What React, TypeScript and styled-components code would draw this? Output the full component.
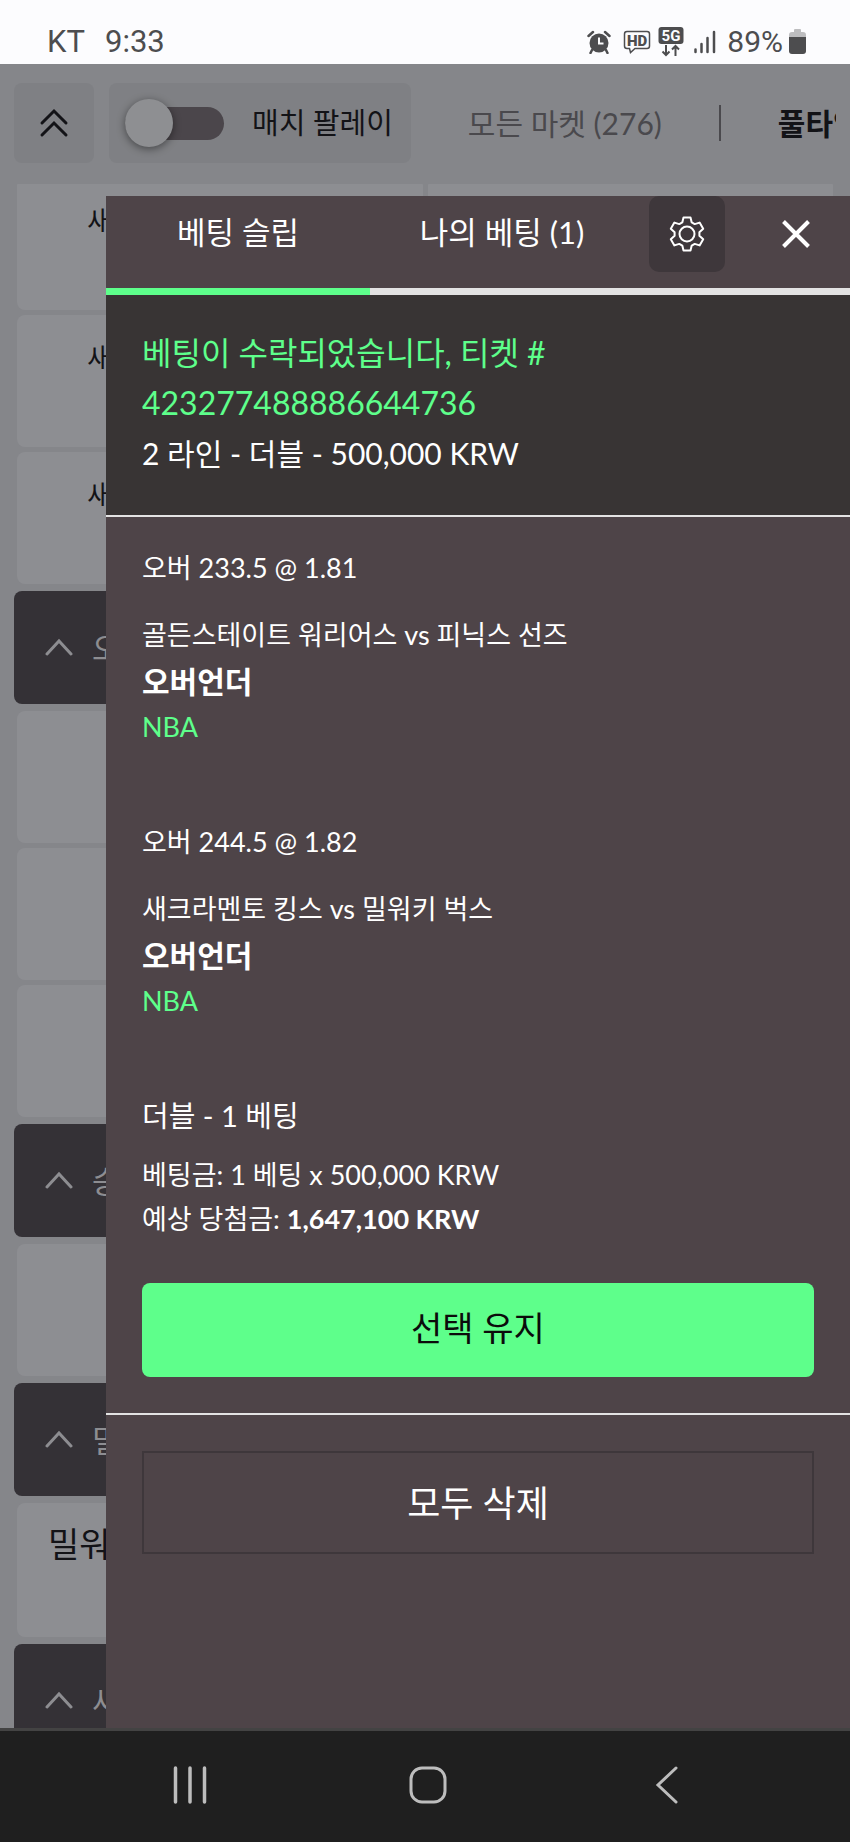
import React from 'react';
import styled, { createGlobalStyle } from 'styled-components';

const color = {
  page: '#85868a',
  card: '#8d8e92',
  control: '#7f8084',
  ink: '#131317',
  header: '#343136',
  headerText: '#8d8d91',
  drawer: '#4e4448',
  banner: '#383434',
  line: '#e3e3e3',
  green: '#5eff8b',
  outline: '#3e373b',
  status: '#4d4d4f',
  nav: '#1f1f1f',
};

const GlobalStyle = createGlobalStyle`
  *, *::before, *::after { box-sizing: border-box; }
  body { margin: 0; background: ${color.nav}; }
  button, input { font: inherit; color: inherit; }
  button { background: none; border: 0; padding: 0; cursor: pointer; }
  p, h2, h3 { margin: 0; font-weight: 400; font-size: inherit; }
  svg { display: block; }
`;

const Screen = styled.div`
  display: flex;
  flex-direction: column;
  min-height: 100vh;
  font-family: Lato, 'Noto Sans CJK KR', sans-serif;
`;

/* ---------- phone status bar ---------- */

const StatusBar = styled.header`
  display: flex;
  align-items: center;
  height: 64px;
  padding: 20px 44px 0 47px;
  background: #fcfcfe;
  color: ${color.status};
  font-family: Roboto, sans-serif;
  font-size: 31px;
  line-height: 36px;
`;

const Clock = styled.span`
  margin-left: 20px;
`;

const StatusIcons = styled.div`
  display: flex;
  align-items: center;
  margin-left: auto;
`;

const StatusIcon = styled.svg<{ $gap: number }>`
  margin-right: ${(p) => p.$gap}px;
`;

const Percent = styled.span`
  margin-right: 6px;
  font-size: 30px;
`;

/* ---------- market page under the drawer ---------- */

const Stage = styled.main`
  display: grid;
  grid-template-columns: minmax(0, 1fr);
  flex: 1;
`;

const MarketPage = styled.section`
  grid-area: 1 / 1;
  contain: size;
  overflow: hidden;
  background: ${color.page};
  color: ${color.ink};
`;

const Toolbar = styled.div`
  display: flex;
  align-items: center;
  height: 120px;
  padding: 0 14px 2px;
  font-size: 29px;
  line-height: 40px;
  white-space: nowrap;
`;

const CollapseButton = styled.button`
  display: grid;
  place-items: center;
  flex: none;
  width: 80px;
  height: 80px;
  border-radius: 8px;
  background: ${color.control};
`;

const ParlayToggle = styled.label`
  display: flex;
  align-items: center;
  flex: none;
  gap: 28px;
  height: 80px;
  margin-left: 15px;
  padding: 0 18px 0 16px;
  border-radius: 8px;
  background: ${color.control};
`;

const Switch = styled.input`
  appearance: none;
  display: flex;
  align-items: center;
  width: 99px;
  height: 33px;
  margin: 0;
  border-radius: 17px;
  background: #4b464b;

  &::before {
    content: '';
    width: 48px;
    height: 48px;
    border-radius: 50%;
    background: #8e8f92;
    box-shadow: 0 2px 8px rgba(0, 0, 0, 0.45);
  }

  &:checked {
    justify-content: flex-end;
  }
`;

const MarketTabs = styled.nav`
  display: flex;
  align-items: center;
  flex: 1;
  gap: 57px;
  min-width: 0;
  padding-left: 57px;
  overflow: hidden;
  font-size: 30px;
`;

const MarketTab = styled.button<{ $active?: boolean }>`
  flex: none;
  color: ${(p) => (p.$active ? color.ink : '#4a494d')};
  font-weight: ${(p) => (p.$active ? 700 : 400)};
`;

const TabDivider = styled.span`
  flex: none;
  width: 2px;
  height: 36px;
  background: #4a494d;
`;

const ListViewport = styled.div`
  overflow: hidden;
`;

const MarketList = styled.div`
  display: flex;
  flex-direction: column;
  gap: 7px;
  margin-top: -6px;
  padding: 0 14px;
`;

const MarketHeader = styled.button`
  display: flex;
  align-items: center;
  gap: 18px;
  width: 100%;
  height: 113px;
  padding: 0 30px 2px;
  border-radius: 8px;
  background: ${color.header};
  color: ${color.headerText};
  font-size: 31px;
  text-align: left;
  white-space: nowrap;
`;

const OddsGrid = styled.div`
  display: grid;
  grid-template-columns: 1fr 1fr;
  gap: 5px;
  padding: 0 3px;
`;

const OddsCard = styled.div<{ $large?: boolean }>`
  height: ${(p) => (p.$large ? 134 : 132)}px;
  padding: ${(p) => (p.$large ? '18px 31px' : '20px 70px')};
  overflow: hidden;
  border-radius: 8px;
  background: ${color.card};
  font-size: ${(p) => (p.$large ? 34 : 27)}px;
  line-height: 46px;
  white-space: nowrap;
`;

/* ---------- bet slip drawer ---------- */

const Drawer = styled.aside`
  grid-area: 1 / 1;
  z-index: 1;
  margin: 132px 0 0 106px;
  background: ${color.drawer};
  color: #fff;
`;

const DrawerHeader = styled.div`
  display: flex;
  height: 99px;
`;

const DrawerTab = styled.button<{ $active?: boolean }>`
  flex: 1;
  padding-bottom: 24px;
  border-bottom: 7px solid ${(p) => (p.$active ? color.green : color.line)};
  font-size: 31px;
  white-space: nowrap;
`;

const DrawerActions = styled.div`
  display: flex;
  align-items: flex-start;
  gap: 33px;
  padding: 0 16px 0 15px;
  border-bottom: 7px solid ${color.line};
`;

const IconButton = styled.button<{ $filled?: boolean }>`
  display: grid;
  place-items: center;
  width: 76px;
  height: 76px;
  border-radius: 10px;
  background: ${(p) => (p.$filled ? color.outline : 'transparent')};
`;

const Banner = styled.div`
  padding: 33px 36px 37px;
  border-bottom: 2px solid ${color.line};
  background: ${color.banner};
  font-size: 30px;
  line-height: 50px;
`;

const Accepted = styled.h2`
  && { font-size: 32px; }
  color: ${color.green};
`;

const SlipBody = styled.div`
  padding: 28px 36px 36px;
  border-bottom: 2px solid ${color.line};
  font-size: 27px;
  line-height: 46px;
`;

const Selection = styled.article`
  margin-bottom: 69px;
`;

const Pick = styled.h3`
  margin-bottom: 21px;
`;

const Market = styled.p`
  && { font-size: 30px; font-weight: 700; }
`;

const League = styled.a`
  display: block;
  width: max-content;
  color: ${color.green};
  text-decoration: none;
`;

const SummaryTitle = styled.h3`
  && { font-size: 29px; }
  margin-bottom: 14px;
`;

const SummaryLine = styled.p`
  line-height: 44px;
`;

const KeepButton = styled.button`
  width: 100%;
  height: 94px;
  margin-top: 42px;
  padding-bottom: 4px;
  border-radius: 8px;
  background: ${color.green};
  color: #0b0b0b;
  font-size: 34px;
`;

const SlipFooter = styled.div`
  padding: 36px;
`;

const ClearButton = styled.button`
  width: 100%;
  height: 103px;
  padding-bottom: 4px;
  border: 2px solid ${color.outline};
  font-size: 36px;
`;

/* ---------- phone navigation bar ---------- */

const NavBar = styled.footer`
  display: flex;
  height: 114px;
  padding: 0 64px 0 71px;
  border-top: 3px solid #434343;
  background: ${color.nav};
`;

const NavButton = styled.button`
  display: grid;
  place-items: center;
  flex: 1;
  padding-bottom: 4px;
`;

/* ---------- icons ---------- */

const gearPoints = Array.from({ length: 6 })
  .flatMap((_, i) =>
    [[-22, 12.5], [-12, 17], [12, 17], [22, 12.5]].map(([offset, r]) => {
      const a = ((i * 60 + offset - 90) * Math.PI) / 180;
      return `${(20 + r * Math.cos(a)).toFixed(1)},${(20 + r * Math.sin(a)).toFixed(1)}`;
    }),
  )
  .join(' ');

const GearIcon = () => (
  <svg width="40" height="40" viewBox="0 0 40 40" fill="none" stroke="#fff" strokeWidth="2" strokeLinejoin="round">
    <polygon points={gearPoints} />
    <circle cx="20" cy="20" r="7.5" />
  </svg>
);

const CloseIcon = () => (
  <svg width="28" height="28" viewBox="0 0 28 28" stroke="#fff" strokeWidth="4">
    <path d="M1.5 1.5 26.5 26.5M26.5 1.5 1.5 26.5" />
  </svg>
);

const ChevronUp = () => (
  <svg width="30" height="18" viewBox="0 0 30 18" fill="none" stroke="currentColor" strokeWidth="3" strokeLinecap="round">
    <path d="M3 16 15 3 27 16" />
  </svg>
);

const DoubleChevronUp = () => (
  <svg width="30" height="30" viewBox="0 0 30 30" fill="none" stroke={color.ink} strokeWidth="3" strokeLinecap="round">
    <path d="M3 15 15 3 27 15M3 27 15 15 27 27" />
  </svg>
);

const AlarmIcon = () => (
  <StatusIcon $gap={12} width="24" height="24" viewBox="0 0 24 24" fill={color.status}>
    <circle cx="12" cy="13" r="9.5" />
    <path d="M1.5 6 6 2M22.5 6 18 2M5 20 3.5 23M19 20 20.5 23" stroke={color.status} strokeWidth="2.5" strokeLinecap="round" />
    <path d="M12 7.5V13.5H16.5" fill="none" stroke="#fcfcfe" strokeWidth="2" />
  </StatusIcon>
);

const HdIcon = () => (
  <StatusIcon $gap={7} width="28" height="24" viewBox="0 0 28 24" fill="none">
    <path d="M4 1.5H24Q26.5 1.5 26.5 4V16Q26.5 18.5 24 18.5H12L7.5 22.5 6.5 18.5H4Q1.5 18.5 1.5 16V4Q1.5 1.5 4 1.5Z" stroke={color.status} strokeWidth="1.5" />
    <text x="14" y="15.5" textAnchor="middle" fontFamily="Roboto, sans-serif" fontSize="15" fontWeight="900" fill={color.status}>HD</text>
  </StatusIcon>
);

const FiveGIcon = () => (
  <StatusIcon $gap={10} width="26" height="30" viewBox="0 0 26 30" fill="none">
    <rect x="0.5" y="0" width="25" height="17" rx="3" fill={color.status} />
    <text x="13" y="14" textAnchor="middle" fontFamily="Roboto, sans-serif" fontSize="15" fontWeight="700" fill="#fcfcfe">5G</text>
    <path d="M8 18V28M4.5 24.5 8 28 11.5 24.5M17.5 29V19M14 22.5 17.5 19 21 22.5" stroke={color.status} strokeWidth="2" />
  </StatusIcon>
);

const SignalIcon = () => (
  <StatusIcon $gap={11} width="22" height="24" viewBox="0 0 22 24" stroke={color.status} strokeWidth="2.5" strokeLinecap="round">
    <path d="M1.5 19.5V22M7.5 14V22M13.5 8V22M20 2V22" />
  </StatusIcon>
);

const BatteryIcon = () => (
  <svg width="17" height="26" viewBox="0 0 17 26">
    <path d="M5 3V1Q5 0 6 0H11Q12 0 12 1V3H14Q17 3 17 6V9H0V6Q0 3 3 3Z" fill="#bdbdbf" />
    <path d="M0 8H17V22Q17 25 14 25H3Q0 25 0 22Z" fill={color.status} />
  </svg>
);

/* ---------- data ---------- */

interface Group {
  title?: string;
  rows: string[];
  large?: boolean;
}

const groups: Group[] = [
  { rows: ['새', '새', '새'] },
  { title: '오', rows: ['', '', ''] },
  { title: '승', rows: [''] },
  { title: '밀', rows: ['밀워'], large: true },
  { title: '새', rows: [] },
];

const selections = [
  { pick: '오버 233.5 @ 1.81', match: '골든스테이트 워리어스 vs 피닉스 선즈' },
  { pick: '오버 244.5 @ 1.82', match: '새크라멘토 킹스 vs 밀워키 벅스' },
];

export default function App() {
  return (
    <Screen lang="ko">
      <GlobalStyle />
      <StatusBar>
        <span>KT</span>
        <Clock>9:33</Clock>
        <StatusIcons>
          <AlarmIcon />
          <HdIcon />
          <FiveGIcon />
          <SignalIcon />
          <Percent>89%</Percent>
          <BatteryIcon />
        </StatusIcons>
      </StatusBar>

      <Stage>
        <MarketPage>
          <Toolbar>
            <CollapseButton aria-label="모두 접기">
              <DoubleChevronUp />
            </CollapseButton>
            <ParlayToggle>
              <Switch type="checkbox" role="switch" />
              매치 팔레이
            </ParlayToggle>
            <MarketTabs>
              <MarketTab>모든 마켓 (276)</MarketTab>
              <TabDivider />
              <MarketTab $active>풀타임</MarketTab>
            </MarketTabs>
          </Toolbar>
          <ListViewport>
            <MarketList>
              {groups.map((group, i) => (
                <React.Fragment key={i}>
                  {group.title && (
                    <MarketHeader>
                      <ChevronUp />
                      {group.title}
                    </MarketHeader>
                  )}
                  {group.rows.length > 0 && (
                    <OddsGrid>
                      {group.rows.map((name, row) => (
                        <React.Fragment key={row}>
                          <OddsCard $large={group.large}>{name}</OddsCard>
                          <OddsCard />
                        </React.Fragment>
                      ))}
                    </OddsGrid>
                  )}
                </React.Fragment>
              ))}
            </MarketList>
          </ListViewport>
        </MarketPage>

        <Drawer>
          <DrawerHeader>
            <DrawerTab $active>베팅 슬립</DrawerTab>
            <DrawerTab>나의 베팅 (1)</DrawerTab>
            <DrawerActions>
              <IconButton $filled aria-label="설정">
                <GearIcon />
              </IconButton>
              <IconButton aria-label="닫기">
                <CloseIcon />
              </IconButton>
            </DrawerActions>
          </DrawerHeader>

          <Banner>
            <Accepted>
              베팅이 수락되었습니다, 티켓 #<br />
              423277488886644736
            </Accepted>
            <p>2 라인 - 더블 - 500,000 KRW</p>
          </Banner>

          <SlipBody>
            {selections.map((s) => (
              <Selection key={s.pick}>
                <Pick>{s.pick}</Pick>
                <p>{s.match}</p>
                <Market>오버언더</Market>
                <League href="#nba">NBA</League>
              </Selection>
            ))}
            <SummaryTitle>더블 - 1 베팅</SummaryTitle>
            <SummaryLine>베팅금: 1 베팅 x 500,000 KRW</SummaryLine>
            <SummaryLine>
              예상 당첨금: <strong>1,647,100 KRW</strong>
            </SummaryLine>
            <KeepButton>선택 유지</KeepButton>
          </SlipBody>

          <SlipFooter>
            <ClearButton>모두 삭제</ClearButton>
          </SlipFooter>
        </Drawer>
      </Stage>

      <NavBar>
        <NavButton aria-label="최근 앱">
          <svg width="36" height="38" viewBox="0 0 36 38" stroke="#bdbdbd" strokeWidth="3.5" strokeLinecap="round">
            <path d="M3.5 2V36M18 2V36M32.5 2V36" />
          </svg>
        </NavButton>
        <NavButton aria-label="홈">
          <svg width="38" height="38" viewBox="0 0 38 38" fill="none" stroke="#bdbdbd" strokeWidth="3">
            <rect x="2" y="2" width="34" height="34" rx="11" />
          </svg>
        </NavButton>
        <NavButton aria-label="뒤로">
          <svg width="24" height="38" viewBox="0 0 24 38" fill="none" stroke="#bdbdbd" strokeWidth="3" strokeLinecap="round">
            <path d="M21 2 3 19 21 36" />
          </svg>
        </NavButton>
      </NavBar>
    </Screen>
  );
}
